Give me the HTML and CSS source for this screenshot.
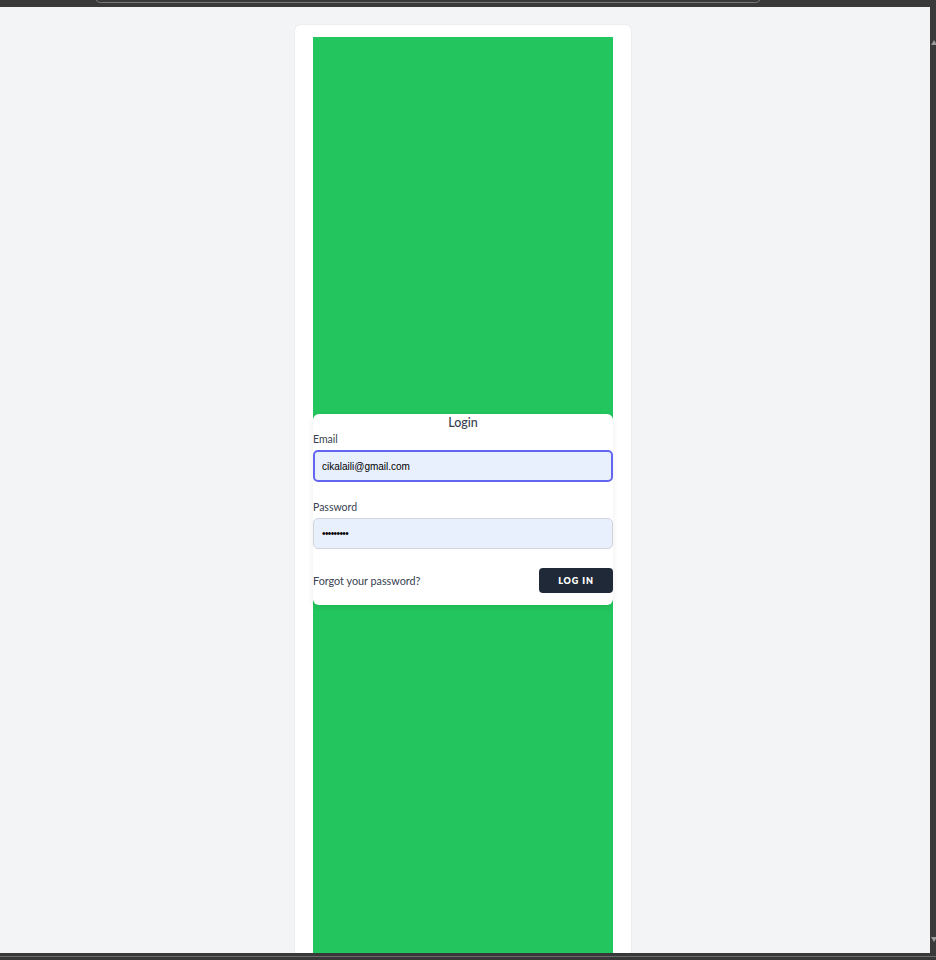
FILE: index.html
```html
<!DOCTYPE html>
<html>
<head>
<meta charset="utf-8">
<link rel="stylesheet" href="styles.css">
</head>
<body>
<div class="frame">
  <div class="topbar"><div class="tab-outline"></div></div>
  <div class="middle">
    <div class="viewport">
      <div class="card">
        <div class="green">
          <form class="login">
            <div class="title">Login</div>
            <label class="label" for="email">Email</label>
            <input id="email" class="input focus" type="email" value="cikalaili@gmail.com">
            <label class="label pw-label" for="pw">Password</label>
            <input id="pw" class="input" type="password" value="cikalaili">
            <div class="actions">
              <a class="forgot" href="#">Forgot your password?</a>
              <button class="btn" type="button">LOG IN</button>
            </div>
          </form>
        </div>
      </div>
    </div>
    <div class="scrollstrip">
      <span class="arrow up"></span>
      <span class="arrow down"></span>
    </div>
  </div>
  <div class="bottombar"><div class="bottomline"></div></div>
</div>
</body>
</html>
```
FILE: styles.css
```css
* { box-sizing: border-box; }
html, body { margin: 0; padding: 0; }
body {
  width: 936px;
  height: 960px;
  overflow: hidden;
  background: #3a3a3a;
  font-family: Lato, "Noto Sans", sans-serif;
}
.frame {
  display: flex;
  flex-direction: column;
  width: 936px;
  height: 960px;
}
.topbar {
  height: 7px;
  background: #393939;
  flex: none;
  overflow: hidden;
}
.tab-outline {
  margin-left: 95px;
  margin-top: -8px;
  width: 666px;
  height: 11px;
  border: 1px solid #7a7a7a;
  border-radius: 8px;
}
.middle {
  display: flex;
  height: 946px;
  flex: none;
}
.viewport {
  width: 930px;
  height: 946px;
  background: #f3f4f6;
  overflow: hidden;
  display: flex;
  padding-top: 18px;
  padding-left: 295px;
}
.card {
  width: 336px;
  height: 1200px;
  background: #ffffff;
  border-radius: 6px;
  padding: 12px 18px 0;
  box-shadow: 0 0 0 1px #eceef1;
  flex: none;
}
.green {
  background: #22c55e;
  height: 1100px;
  padding-top: 377px;
}
.login {
  background: #ffffff;
  border-radius: 6px;
  height: 191px;
  display: flex;
  flex-direction: column;
  box-shadow: 0 2px 6px rgba(0,0,0,0.08);
  margin: 0;
}
.title {
  text-align: center;
  font-size: 12.5px;
  font-weight: 500;
  color: #374151;
  line-height: 16px;
  margin-top: 1px;
}
.label {
  font-size: 10.5px;
  color: #374151;
  line-height: 14px;
  margin-top: 1px;
  display: block;
}
.pw-label { margin-top: 18px; }
.input {
  display: block;
  width: 300px;
  height: 32px;
  margin: 4px 0 0;
  background: #e8f0fe;
  border: 1px solid #d1d5db;
  border-radius: 5px;
  padding: 0 8px;
  font-family: "Liberation Sans", Arial, sans-serif;
  font-size: 10px;
  color: #000;
  outline: none;
}
.input.focus {
  border: 2px solid #6366f1;
  padding: 0 7px;
}
#pw { height: 31px; letter-spacing: -0.6px; }
.actions {
  display: flex;
  justify-content: space-between;
  align-items: center;
  margin-top: 19px;
}
.forgot {
  font-size: 10.8px;
  color: #374151;
  text-decoration: none;
}
.btn {
  width: 74px;
  height: 25px;
  background: #1f2937;
  color: #fff;
  border: none;
  border-radius: 4px;
  font-family: Lato, "Noto Sans", sans-serif;
  font-size: 9px;
  font-weight: 800;
  letter-spacing: 0.9px;
  padding: 0;
}
.scrollstrip {
  width: 6px;
  background: #3a3a3a;
  position: relative;
}
.arrow {
  position: absolute;
  left: 1px;
  width: 0;
  height: 0;
  border-left: 3px solid transparent;
  border-right: 3px solid transparent;
}
.arrow.up { top: 33px; border-bottom: 5px solid #9a9a9a; }
.arrow.down { top: 930px; border-top: 5px solid #9a9a9a; }
.bottombar {
  height: 7px;
  background: #383838;
  flex: none;
  padding-top: 3px;
}
.bottomline {
  height: 1px;
  background: #6b6b6b;
}
```
